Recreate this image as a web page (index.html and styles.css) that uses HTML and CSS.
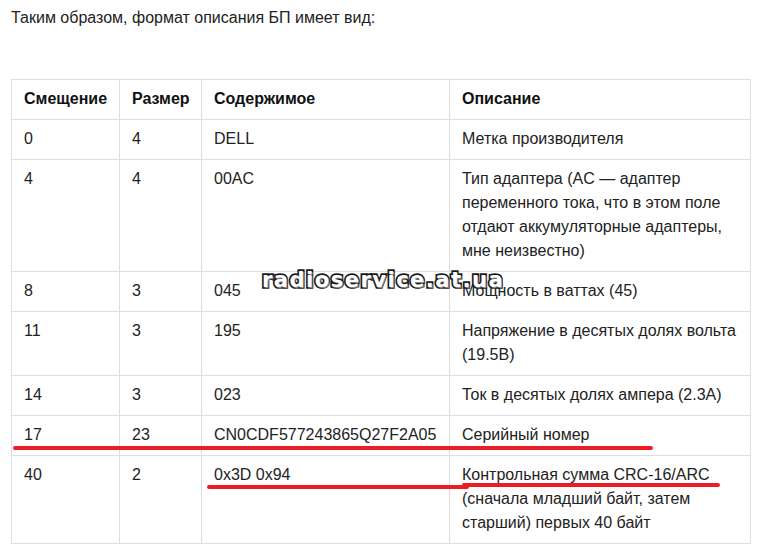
FILE: index.html
```
<!DOCTYPE html>
<html lang="ru">
<head>
<meta charset="utf-8">
<link rel="stylesheet" href="styles.css">
</head>
<body>
<div class="page">
  <p class="intro">Таким образом, формат описания БП имеет вид:</p>
  <table class="spec">
    <colgroup>
      <col class="c1"><col class="c2"><col class="c3"><col class="c4">
    </colgroup>
    <thead>
      <tr><th>Смещение</th><th>Размер</th><th>Содержимое</th><th>Описание</th></tr>
    </thead>
    <tbody>
      <tr><td>0</td><td>4</td><td>DELL</td><td>Метка производителя</td></tr>
      <tr><td>4</td><td>4</td><td>00AC</td><td>Тип адаптера (AC — адаптер переменного тока, что в этом поле отдают аккумуляторные адаптеры, мне неизвестно)</td></tr>
      <tr><td>8</td><td>3</td><td>045</td><td>Мощность в ваттах (45)</td></tr>
      <tr><td>11</td><td>3</td><td>195</td><td>Напряжение в десятых долях вольта (19.5В)</td></tr>
      <tr><td>14</td><td>3</td><td>023</td><td>Ток в десятых долях ампера (2.3А)</td></tr>
      <tr><td>17</td><td>23</td><td>CN0CDF577243865Q27F2A05</td><td>Серийный номер</td></tr>
      <tr><td>40</td><td>2</td><td>0x3D 0x94</td><td>Контрольная сумма CRC-16/ARC (сначала младший байт, затем старший) первых 40 байт</td></tr>
    </tbody>
  </table>
</div>
<div class="watermark">radioservice.at.ua</div>
<div class="mark mark-1"></div>
<div class="mark mark-2a"></div>
<div class="mark mark-2b"></div>
</body>
</html>
```
FILE: styles.css
```
html, body {
  margin: 0;
  padding: 0;
  background: #fff;
}
body {
  font-family: "Liberation Sans", Arial, sans-serif;
  font-size: 16px;
  line-height: 24px;
  color: #222;
}
.page {
  padding: 6px 0 0 11px;
}
.intro {
  margin: 0;
}
.spec {
  margin-top: 49px;
  border-collapse: collapse;
  table-layout: fixed;
  width: 739px;
}
.c1 { width: 108px; }
.c2 { width: 82px; }
.c3 { width: 248px; }
.c4 { width: 301px; }
.spec th,
.spec td {
  border: 1px solid #dcdfe1;
  padding: 7px 12px 8px;
  text-align: left;
  vertical-align: top;
}
.spec th {
  font-weight: bold;
  color: #111;
}
.watermark {
  position: absolute;
  left: 262px;
  top: 268px;
  font-family: "DejaVu Sans", Verdana, sans-serif;
  font-weight: bold;
  font-size: 21px;
  line-height: 24px;
  letter-spacing: 1.5px;
  color: #fff;
  -webkit-text-stroke: 3.5px #1a1a1a;
  paint-order: stroke fill;
  text-shadow: 1px 1px 0 #888;
}
.mark {
  position: absolute;
  height: 4px;
  background: #ed1c24;
  border-radius: 2px;
}
.mark-1 {
  left: 13px;
  top: 446px;
  width: 640px;
}
.mark-2a {
  left: 207px;
  top: 485px;
  width: 262px;
}
.mark-2b {
  left: 462px;
  top: 483px;
  width: 258px;
}
```
